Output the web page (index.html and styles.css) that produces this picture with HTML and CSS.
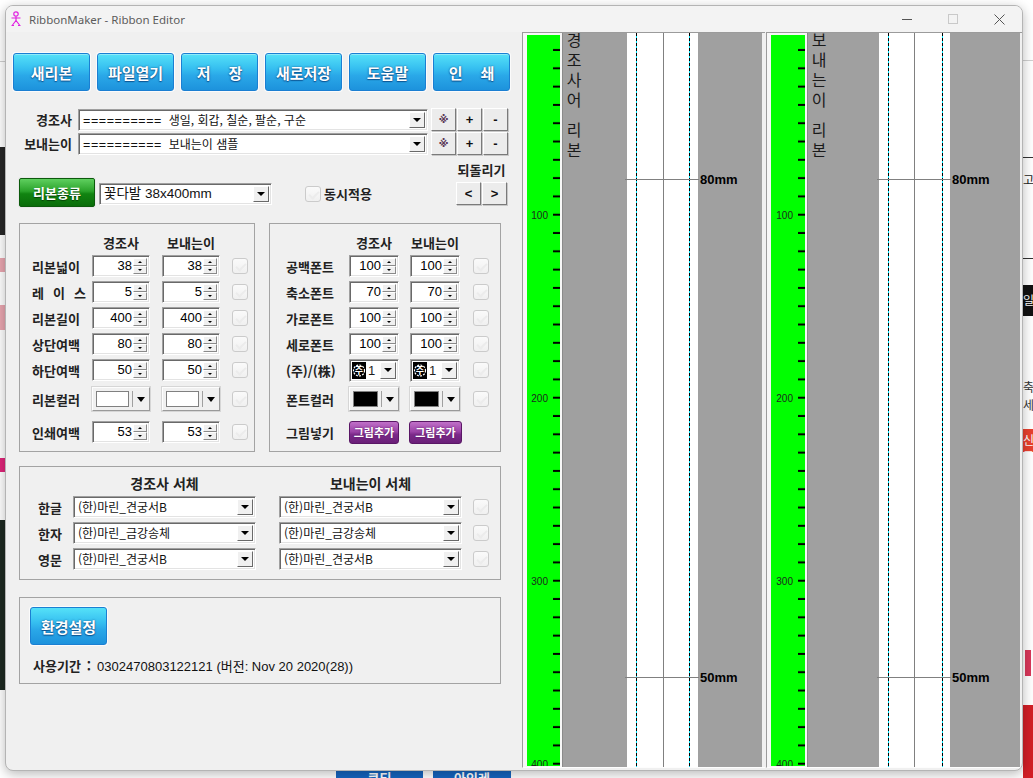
FILE: index.html
```html
<!DOCTYPE html>
<html lang="ko">
<head>
<meta charset="utf-8">
<title>RibbonMaker - Ribbon Editor</title>
<link rel="stylesheet" href="styles.css">
</head>
<body>
<div class="bg">
  <div class="bgl bgl1"></div>
  <div class="bgl bgl2"></div>
  <div class="bgl bgl3"></div>
  <div class="bgl bgl4"></div>
  <div class="bgl bgl5"></div>
  <div class="bgl bgl6"></div>
  <div class="bgr bgr1"></div>
  <div class="bgr bgr2">고</div>
  <div class="bgr bgr3"></div>
  <div class="bgr bgr4">일</div>
  <div class="bgr bgr5"></div>
  <div class="bgr bgr6">축<br>세요</div>
  <div class="bgr bgr7">신고</div>
  <div class="bgr bgr8"></div>
  <div class="bgr bgr9"></div>
  <div class="bgb bgb1">쿠티</div>
  <div class="bgb bgb2">아인레</div>
</div>

<div class="win">
  <div class="titlebar">
    <svg class="appicon" width="12" height="16" viewBox="0 0 12 16">
      <circle cx="6" cy="3" r="2.2" fill="none" stroke="#e020e0" stroke-width="1.2"/>
      <path d="M1.5 7h9M6 5.5v4M6 9.5L2.5 14M6 9.5l3.5 4.5M1.5 14.5h2.5M8 14.5h2.5" stroke="#e020e0" stroke-width="1.2" fill="none"/>
    </svg>
    <span class="title">RibbonMaker - Ribbon Editor</span>
    <div class="ctrls">
      <div class="ctrl"><span class="minl"></span></div>
      <div class="ctrl"><span class="maxb"></span></div>
      <div class="ctrl"><svg width="11" height="11" viewBox="0 0 11 11"><path d="M0.5 0.5l10 10M10.5 0.5l-10 10" stroke="#555" stroke-width="1"/></svg></div>
    </div>
  </div>

  <div class="client">
    <div class="leftpane">
      <div class="toolbar">
        <div class="tbtn">새리본</div>
        <div class="tbtn">파일열기</div>
        <div class="tbtn">저<span class="gap18"></span>장</div>
        <div class="tbtn">새로저장</div>
        <div class="tbtn">도움말</div>
        <div class="tbtn">인<span class="gap18"></span>쇄</div>
      </div>

      <div class="namerow r1">
        <div class="nlabel">경조사</div>
        <div class="combo wname"><span class="ctext"><span class="eq">==========</span>&nbsp;&nbsp;생일, 회갑, 칠순, 팔순, 구순</span><span class="ddb"></span></div>
        <div class="sbtns"><div class="sbtn kome">※</div><div class="sbtn">+</div><div class="sbtn">-</div></div>
      </div>
      <div class="namerow r2">
        <div class="nlabel">보내는이</div>
        <div class="combo wname"><span class="ctext"><span class="eq">==========</span>&nbsp;&nbsp;보내는이 샘플</span><span class="ddb"></span></div>
        <div class="sbtns"><div class="sbtn kome">※</div><div class="sbtn">+</div><div class="sbtn">-</div></div>
      </div>

      <div class="typerow">
        <div class="gbtn">리본종류</div>
        <div class="combo wtype"><span class="ctext big">꽃다발 38x400mm</span><span class="ddb"></span></div>
        <div class="sync"><span class="chk"></span><span class="blabel">동시적용</span></div>
        <div class="undo">
          <div class="blabel">되돌리기</div>
          <div class="sbtns"><div class="sbtn">&lt;</div><div class="sbtn">&gt;</div></div>
        </div>
      </div>

      <div class="groups">
        <div class="grp g1">
          <div class="grow ghead"><span class="glab"></span><span class="hc c1">경조사</span><span class="hc c2">보내는이</span></div>
          <div class="grow"><span class="glab">리본넓이</span>
            <div class="spin c1"><span class="val">38</span><span class="arrows"><i></i><i class="dn"></i></span></div>
            <div class="spin c2"><span class="val">38</span><span class="arrows"><i></i><i class="dn"></i></span></div>
            <span class="chk ck"></span></div>
          <div class="grow"><span class="glab spread"><span>레</span><span>이</span><span>스</span></span>
            <div class="spin c1"><span class="val">5</span><span class="arrows"><i></i><i class="dn"></i></span></div>
            <div class="spin c2"><span class="val">5</span><span class="arrows"><i></i><i class="dn"></i></span></div>
            <span class="chk ck"></span></div>
          <div class="grow"><span class="glab">리본길이</span>
            <div class="spin c1"><span class="val">400</span><span class="arrows"><i></i><i class="dn"></i></span></div>
            <div class="spin c2"><span class="val">400</span><span class="arrows"><i></i><i class="dn"></i></span></div>
            <span class="chk ck"></span></div>
          <div class="grow"><span class="glab">상단여백</span>
            <div class="spin c1"><span class="val">80</span><span class="arrows"><i></i><i class="dn"></i></span></div>
            <div class="spin c2"><span class="val">80</span><span class="arrows"><i></i><i class="dn"></i></span></div>
            <span class="chk ck"></span></div>
          <div class="grow"><span class="glab">하단여백</span>
            <div class="spin c1"><span class="val">50</span><span class="arrows"><i></i><i class="dn"></i></span></div>
            <div class="spin c2"><span class="val">50</span><span class="arrows"><i></i><i class="dn"></i></span></div>
            <span class="chk ck"></span></div>
          <div class="grow rowc"><span class="glab">리본컬러</span>
            <div class="ccombo c1"><span class="sw swhite"></span><span class="csep"></span><span class="tri"></span></div>
            <div class="ccombo c2"><span class="sw swhite"></span><span class="csep"></span><span class="tri"></span></div>
            <span class="chk ck"></span></div>
          <div class="grow rowl"><span class="glab">인쇄여백</span>
            <div class="spin c1"><span class="val">53</span><span class="arrows"><i></i><i class="dn"></i></span></div>
            <div class="spin c2"><span class="val">53</span><span class="arrows"><i></i><i class="dn"></i></span></div>
            <span class="chk ck"></span></div>
        </div>

        <div class="grp g2">
          <div class="grow ghead"><span class="glab"></span><span class="hc c1">경조사</span><span class="hc c2">보내는이</span></div>
          <div class="grow"><span class="glab">공백폰트</span>
            <div class="spin c1"><span class="val">100</span><span class="arrows"><i></i><i class="dn"></i></span></div>
            <div class="spin c2"><span class="val">100</span><span class="arrows"><i></i><i class="dn"></i></span></div>
            <span class="chk ck"></span></div>
          <div class="grow"><span class="glab">축소폰트</span>
            <div class="spin c1"><span class="val">70</span><span class="arrows"><i></i><i class="dn"></i></span></div>
            <div class="spin c2"><span class="val">70</span><span class="arrows"><i></i><i class="dn"></i></span></div>
            <span class="chk ck"></span></div>
          <div class="grow"><span class="glab">가로폰트</span>
            <div class="spin c1"><span class="val">100</span><span class="arrows"><i></i><i class="dn"></i></span></div>
            <div class="spin c2"><span class="val">100</span><span class="arrows"><i></i><i class="dn"></i></span></div>
            <span class="chk ck"></span></div>
          <div class="grow"><span class="glab">세로폰트</span>
            <div class="spin c1"><span class="val">100</span><span class="arrows"><i></i><i class="dn"></i></span></div>
            <div class="spin c2"><span class="val">100</span><span class="arrows"><i></i><i class="dn"></i></span></div>
            <span class="chk ck"></span></div>
          <div class="grow"><span class="glab">(주)/(株)</span>
            <div class="jcombo c1">
              <svg class="jicon" width="14" height="17" viewBox="0 0 14 17"><rect width="14" height="17" fill="#000"/><circle cx="7" cy="8.5" r="5.5" fill="none" stroke="#fff" stroke-width="1.2" stroke-dasharray="2 1.2"/><text x="7" y="12" font-size="9" font-weight="700" fill="#fff" text-anchor="middle" font-family="Noto Sans CJK KR, sans-serif">주</text></svg>
              <span class="jval">1</span><span class="ddb"></span></div>
            <div class="jcombo c2">
              <svg class="jicon" width="14" height="17" viewBox="0 0 14 17"><rect width="14" height="17" fill="#000"/><circle cx="7" cy="8.5" r="5.5" fill="none" stroke="#fff" stroke-width="1.2" stroke-dasharray="2 1.2"/><text x="7" y="12" font-size="9" font-weight="700" fill="#fff" text-anchor="middle" font-family="Noto Sans CJK KR, sans-serif">주</text></svg>
              <span class="jval">1</span><span class="ddb"></span></div>
            <span class="chk ck"></span></div>
          <div class="grow rowc"><span class="glab">폰트컬러</span>
            <div class="ccombo c1"><span class="sw sblack"></span><span class="csep"></span><span class="tri"></span></div>
            <div class="ccombo c2"><span class="sw sblack"></span><span class="csep"></span><span class="tri"></span></div>
            <span class="chk ck"></span></div>
          <div class="grow rowl"><span class="glab">그림넣기</span>
            <div class="pbtn c1">그림추가</div>
            <div class="pbtn c2">그림추가</div>
          </div>
        </div>
      </div>

      <div class="grp fgrp">
        <div class="frow fhead"><span class="flab"></span><span class="fh f1">경조사 서체</span><span class="fh f2">보내는이 서체</span></div>
        <div class="frow"><span class="flab">한글</span>
          <div class="combo f1"><span class="ctext">(한)마린_견궁서B</span><span class="ddb"></span></div>
          <div class="combo f2"><span class="ctext">(한)마린_견궁서B</span><span class="ddb"></span></div>
          <span class="chk fck"></span></div>
        <div class="frow"><span class="flab">한자</span>
          <div class="combo f1"><span class="ctext">(한)마린_금강송체</span><span class="ddb"></span></div>
          <div class="combo f2"><span class="ctext">(한)마린_금강송체</span><span class="ddb"></span></div>
          <span class="chk fck"></span></div>
        <div class="frow"><span class="flab">영문</span>
          <div class="combo f1"><span class="ctext">(한)마린_견궁서B</span><span class="ddb"></span></div>
          <div class="combo f2"><span class="ctext">(한)마린_견궁서B</span><span class="ddb"></span></div>
          <span class="chk fck"></span></div>
      </div>

      <div class="grp info">
        <div class="tbtn envbtn">환경설정</div>
        <div class="period"><span class="blabel">사용기간</span><span class="blabel colon">:</span><span class="ptext">0302470803122121 (버전: Nov 20 2020(28))</span></div>
      </div>
    </div>

    <div class="preview">
      <div class="panel p1">
        <div class="frame">
          <div class="rwrap">
            <svg class="ruler" width="33" height="731" viewBox="0 0 33 731">
              <defs><pattern id="tk1" width="33" height="18.3" patternUnits="userSpaceOnUse" y="-2.3"><rect x="26" y="16.3" width="7" height="2" fill="#000"/></pattern></defs>
              <rect width="33" height="731" fill="#00ff00"/>
              <rect width="33" height="731" fill="url(#tk1)"/>
              <text x="21" y="184" class="rl">100</text>
              <text x="21" y="367" class="rl">200</text>
              <text x="21" y="550" class="rl">300</text>
              <text x="21" y="733" class="rl">400</text>
            </svg>
          </div>
          <div class="gstrip gl1">
            <div class="vtext"><span class="vw">경조사어</span><span class="vw">리본</span></div>
          </div>
          <div class="wstrip">
            <span class="dash d1"></span><span class="cline c36"></span><span class="dash d2"></span>
          </div>
          <div class="gstrip gr1"></div>
        </div>
        <span class="mline m80 l1"></span><span class="mlab t80 lb1">80mm</span>
        <span class="mline m50 l1"></span><span class="mlab t50 lb1">50mm</span>
      </div>

      <div class="panel p2">
        <div class="frame">
          <div class="rwrap">
            <svg class="ruler" width="34" height="731" viewBox="0 0 34 731">
              <defs><pattern id="tk2" width="34" height="18.3" patternUnits="userSpaceOnUse" y="-2.3"><rect x="27" y="16.3" width="7" height="2" fill="#000"/></pattern></defs>
              <rect width="34" height="731" fill="#00ff00"/>
              <rect width="34" height="731" fill="url(#tk2)"/>
              <text x="22" y="184" class="rl">100</text>
              <text x="22" y="367" class="rl">200</text>
              <text x="22" y="550" class="rl">300</text>
              <text x="22" y="733" class="rl">400</text>
            </svg>
          </div>
          <div class="gstrip gl2">
            <div class="vtext"><span class="vw">보내는이</span><span class="vw">리본</span></div>
          </div>
          <div class="wstrip">
            <span class="dash d1"></span><span class="cline c35"></span><span class="dash d2b"></span>
          </div>
          <div class="gstrip gr2"></div>
        </div>
        <span class="mline m80 l2"></span><span class="mlab t80 lb2">80mm</span>
        <span class="mline m50 l2"></span><span class="mlab t50 lb2">50mm</span>
      </div>
    </div>
  </div>
</div>
</body>
</html>
```

FILE: styles.css
```css
* { box-sizing: border-box; margin: 0; padding: 0; }

html, body {
  width: 1033px;
  height: 778px;
  overflow: hidden;
}

body {
  position: relative;
  background: #fff;
  font-family: "Noto Sans CJK KR", "Liberation Sans", sans-serif;
  color: #1e1e1e;
}

/* ---------- page behind the window ---------- */
.bg { position: absolute; inset: 0; }
.bgl, .bgr, .bgb { position: absolute; overflow: hidden; }
.bgl { left: 0; width: 6px; }
.bgl1 { top: 61px; height: 1px; background: #cfcfcf; }
.bgl2 { top: 147px; height: 88px; background: #272727; }
.bgl3 { top: 258px; height: 14px; background: #e9a6b0; }
.bgl4 { top: 305px; height: 25px; background: #e9a6b0; }
.bgl5 { top: 458px; height: 14px; background: #e0267a; }
.bgl6 { top: 520px; height: 170px; background: #1e2a22; }

.bgr { left: 1023px; width: 10px; font-size: 12px; line-height: 16px; }
.bgr1 { top: 60px; height: 1px; background: #d0d0d0; }
.bgr2 { top: 172px; height: 16px; color: #222; }
.bgr3 { top: 157px; height: 1px; background: #333; }
.bgr4 { top: 285px; height: 31px; background: #111; color: #fff; padding-top: 7px; }
.bgr5 { top: 258px; height: 1px; background: #333; }
.bgr6 { top: 378px; height: 36px; color: #333; line-height: 18px; }
.bgr7 { top: 429px; height: 23px; background: #e8412f; color: #fff; padding-top: 3px; }
.bgr8 { top: 650px; height: 26px; left: 1025px; width: 6px; background: #d8375a; }
.bgr9 { top: 705px; height: 73px; background: #d21f26; }

.bgb { top: 768px; height: 10px; background: #1565c0; color: #fff; font-size: 13px; font-weight: 700; line-height: 20px; text-align: center; }
.bgb1 { left: 336px; width: 87px; }
.bgb2 { left: 433px; width: 78px; }

/* ---------- window ---------- */
.win {
  position: absolute;
  left: 5px;
  top: 5px;
  width: 1018px;
  height: 766px;
  border: 1px solid #b4b4b4;
  border-radius: 8px;
  background: #f0f0f0;
  box-shadow: 0 3px 12px rgba(0, 0, 0, 0.28);
  overflow: hidden;
  display: flex;
  flex-direction: column;
}

.titlebar {
  height: 26px;
  flex: none;
  display: flex;
  align-items: center;
  background: #f3f3f3;
}
.appicon { margin-left: 4px; flex: none; }
.title {
  margin-left: 7px;
  font-family: "Noto Sans", "Open Sans", sans-serif;
  font-size: 11.5px;
  color: #5c5c5c;
}
.ctrls { margin-left: auto; display: flex; height: 26px; }
.ctrl { width: 46px; height: 26px; display: flex; align-items: center; justify-content: center; }
.minl { width: 10px; height: 1px; background: #555; }
.maxb { width: 10px; height: 10px; border: 1px solid #c9c9c9; }

.client { flex: 1; display: flex; min-height: 0; }

/* ---------- left pane ---------- */
.leftpane {
  width: 515px;
  flex: none;
  padding-top: 21px;
  display: flex;
  flex-direction: column;
}

.toolbar { display: flex; gap: 7px; margin-left: 7px; }

.tbtn {
  width: 77px;
  height: 38px;
  border: 1px solid #1b7fd2;
  border-radius: 3px;
  background: linear-gradient(#55e1f8 0%, #36bff0 40%, #2aa8e8 60%, #1d92dc 100%);
  box-shadow: 0 0 0 1px #fbfbfb, inset 0 1px 0 rgba(255,255,255,0.35);
  color: #fff;
  font-size: 15px;
  font-weight: 700;
  text-shadow: 0 0 2px rgba(0, 50, 110, 0.75), 0 1px 1px rgba(0, 50, 110, 0.6);
  display: flex;
  align-items: center;
  justify-content: center;
  white-space: nowrap;
}
.gap18 { display: inline-block; width: 18px; }

.namerow { display: flex; align-items: center; height: 23px; }
.r1 { margin-top: 17px; }
.r2 { margin-top: 1px; }
.nlabel {
  width: 66px;
  text-align: right;
  font-size: 13px;
  font-weight: 700;
  color: #222;
}

/* sunken combo */
.combo {
  display: flex;
  height: 22px;
  background: #fff;
  border: 1px solid;
  border-color: #a0a0a0 #fff #fff #a0a0a0;
  box-shadow: inset 1px 1px 0 #696969, inset -1px -1px 0 #e3e3e3;
  padding: 2px;
}
.wname { width: 350px; margin-left: 6px; }
.ctext {
  flex: 1;
  font-size: 12px;
  line-height: 16px;
  padding-left: 2px;
  white-space: nowrap;
  overflow: hidden;
  color: #111;
}
.ctext.big { font-size: 13.5px; font-family: "Liberation Sans", "Noto Sans CJK KR", sans-serif; }
.eq { font-family: "Liberation Sans", sans-serif; font-size: 12.5px; letter-spacing: 0.6px; }
.ddb {
  width: 16px;
  flex: none;
  background: #f0f0f0;
  border: 1px solid;
  border-color: #fff #696969 #696969 #fff;
  position: relative;
}
.ddb::after {
  content: "";
  position: absolute;
  left: 50%;
  top: 50%;
  margin: -2px 0 0 -4px;
  border-left: 4px solid transparent;
  border-right: 4px solid transparent;
  border-top: 4px solid #000;
}

.sbtns { display: flex; gap: 1px; margin-left: 3px; }
.sbtn {
  width: 25px;
  height: 23px;
  background: #ececec;
  border: 1px solid;
  border-color: #fff #7a7a7a #7a7a7a #fff;
  box-shadow: 1px 1px 0 #c8c8c8;
  display: flex;
  align-items: center;
  justify-content: center;
  font-family: "Liberation Sans", sans-serif;
  font-size: 13px;
  font-weight: 700;
  color: #111;
}
.sbtn.kome { font-family: "DejaVu Sans", "Noto Sans CJK KR", sans-serif; font-size: 10px; font-weight: 700; color: #5e3a58; }

.typerow {
  display: flex;
  align-items: flex-end;
  height: 47px;
  margin-top: 5px;
  padding-left: 13px;
  padding-right: 14px;
}
.gbtn {
  width: 76px;
  height: 29px;
  border: 1px solid #0c5a0c;
  border-radius: 2px;
  background: linear-gradient(#5fcf5f 0%, #2aa22a 45%, #118411 55%, #0a6d0a 100%);
  box-shadow: 0 0 0 1px #e8e8e8;
  color: #fff;
  font-size: 13px;
  font-weight: 700;
  text-shadow: 0 1px 1px rgba(0, 40, 0, 0.7);
  display: flex;
  align-items: center;
  justify-content: center;
}
.wtype { width: 173px; margin-left: 4px; margin-bottom: 2px; }
.sync { display: flex; align-items: center; margin-left: 33px; margin-bottom: 4px; }
.sync .blabel { margin-left: 3px; }
.blabel { font-size: 13px; font-weight: 700; color: #222; white-space: nowrap; }
.undo { margin-left: auto; display: flex; flex-direction: column; align-items: center; margin-bottom: 2px; }
.undo .sbtns { margin-left: 0; margin-top: 3px; }

/* disabled check */
.chk {
  width: 16px;
  height: 16px;
  flex: none;
  border: 1px solid #cbcbcb;
  border-radius: 3px;
  background: linear-gradient(#fafafa, #f0f0f0);
  position: relative;
  display: inline-block;
}
.chk::after {
  content: "";
  position: absolute;
  left: 5px;
  top: 2px;
  width: 4px;
  height: 8px;
  border: solid #ececec;
  border-width: 0 2px 2px 0;
  transform: rotate(45deg);
}

/* ---------- groups ---------- */
.grp { border: 1px solid #a3a3a3; }

.groups { display: flex; gap: 14px; margin-top: 16px; margin-left: 13px; }
.g1 { width: 236px; height: 229px; padding: 9px 0 0 12px; }
.g2 { width: 232px; height: 229px; padding: 9px 0 0 16px; }

.grow { display: flex; align-items: center; height: 22px; margin-top: 4px; }
.grow.ghead { height: 18px; margin-top: 0; }
.grow.rowc { height: 24px; margin-top: 6px; }
.grow.rowl { margin-top: 10px; }

.glab { font-size: 13px; font-weight: 700; color: #222; white-space: nowrap; flex: none; }
.g1 .glab { width: 60px; }
.g2 .glab { width: 63px; }
.glab.spread { display: flex; justify-content: space-between; padding-right: 6px; }

.hc { font-size: 13px; font-weight: 700; text-align: center; color: #222; flex: none; }

.g1 .c1 { width: 58px; }
.g1 .c2 { width: 58px; margin-left: 12px; }
.g1 .ck { margin-left: 12px; }
.g2 .c1 { width: 50px; }
.g2 .c2 { width: 50px; margin-left: 11px; }
.g2 .ck { margin-left: 13px; }

.spin {
  display: flex;
  height: 22px;
  flex: none;
  background: #fff;
  border: 1px solid;
  border-color: #a0a0a0 #fff #fff #a0a0a0;
  box-shadow: inset 1px 1px 0 #696969, inset -1px -1px 0 #e3e3e3;
  padding: 2px;
}
.val {
  flex: 1;
  text-align: right;
  font-family: "Liberation Sans", sans-serif;
  font-size: 13px;
  line-height: 16px;
  padding-right: 1px;
  color: #000;
}
.arrows { width: 14px; display: flex; flex-direction: column; flex: none; }
.arrows i {
  flex: 1;
  background: #f0f0f0;
  border: 1px solid;
  border-color: #fff #8a8a8a #8a8a8a #fff;
  position: relative;
}
.arrows i::after {
  content: "";
  position: absolute;
  left: 50%;
  top: 50%;
  margin: -1px 0 0 -2px;
  border-left: 2px solid transparent;
  border-right: 2px solid transparent;
  border-bottom: 2px solid #000;
}
.arrows i.dn::after { border-bottom: 0; border-top: 2px solid #000; }

.ccombo {
  height: 24px;
  flex: none;
  display: flex;
  align-items: center;
  background: #f0f0f0;
  border: 1px solid;
  border-color: #fdfdfd #9a9a9a #9a9a9a #fdfdfd;
  box-shadow: 0 0 0 1px #d6d6d6;
  padding-left: 3px;
}
.sw { width: 33px; height: 16px; border: 1px solid #808080; flex: none; }
.g2 .sw { width: 25px; }
.swhite { background: #fff; }
.sblack { background: #000; }
.csep { width: 1px; height: 16px; background: #a0a0a0; margin-left: 3px; flex: none; }
.tri {
  margin-left: 4px;
  flex: none;
  border-left: 4px solid transparent;
  border-right: 4px solid transparent;
  border-top: 5px solid #000;
}

.jcombo {
  display: flex;
  align-items: center;
  height: 23px;
  flex: none;
  background: #fff;
  border: 1px solid;
  border-color: #a0a0a0 #fff #fff #a0a0a0;
  box-shadow: inset 1px 1px 0 #696969, inset -1px -1px 0 #e3e3e3;
  padding: 2px;
}
.jicon { flex: none; }
.jval { flex: 1; font-family: "Liberation Sans", sans-serif; font-size: 13px; padding-left: 2px; }
.jcombo .ddb { align-self: stretch; }

.pbtn {
  height: 23px;
  width: 52px;
  flex: none;
  border: 1px solid #5a1766;
  border-radius: 3px;
  background: linear-gradient(#c070c8 0%, #9c44a8 45%, #7c2a8a 60%, #6a1f78 100%);
  color: #fff;
  font-size: 11px;
  font-weight: 700;
  text-shadow: 0 0 2px rgba(60, 0, 70, 0.7);
  display: flex;
  align-items: center;
  justify-content: center;
  white-space: nowrap;
}
.g2 .pbtn.c2 { margin-left: 10px; width: 53px; }

/* font group */
.fgrp { width: 482px; height: 114px; margin-top: 14px; margin-left: 13px; padding: 7px 0 0 18px; }
.frow { display: flex; align-items: center; height: 22px; margin-top: 4px; }
.frow.fhead { height: 18px; margin-top: 0; }
.flab { width: 35px; flex: none; font-size: 13px; font-weight: 700; color: #222; }
.fh { font-size: 14px; font-weight: 700; text-align: center; color: #222; flex: none; }
.f1 { width: 183px; flex: none; }
.f2 { width: 183px; flex: none; margin-left: 23px; }
.fck { margin-left: 11px; }

/* info group */
.info { width: 482px; height: 87px; margin-top: 17px; margin-left: 13px; padding: 9px 0 0 10px; }
.envbtn { box-shadow: 0 0 0 1px #fbfbfb; }
.period { display: flex; align-items: baseline; margin-top: 11px; margin-left: 3px; }
.colon { margin-left: 6px; }
.ptext { margin-left: 6px; font-family: "Liberation Sans", "Noto Sans CJK KR", sans-serif; font-size: 13px; color: #111; }

/* ---------- preview panels ---------- */
.preview { flex: 1; display: flex; }
.panel {
  position: relative;
  height: 100%;
  display: flex;
  padding: 0 0 2px 1px;
}
.p1 { width: 244px; }
.p2 { width: 257px; }
.frame {
  flex: 1;
  display: flex;
  border-top: 1px solid #9b9b9b;
  border-left: 1px solid #9b9b9b;
  border-bottom: 1px solid #fdfdfd;
}
.rwrap {
  flex: none;
  padding: 2px 2px 1px 4px;
  background: #f7f7f7;
  border-right: 1px solid #8a8a8a;
  display: flex;
}
.ruler { display: block; }
.rl { font-family: "Liberation Sans", sans-serif; font-size: 10px; fill: #1d2a1d; text-anchor: end; }

.gstrip { background: #a0a0a0; flex: none; overflow: hidden; }
.gl1, .gr1 { width: 64px; }
.gl2 { width: 71px; }
.gr2 { width: 70px; }
.wstrip { background: #fff; width: 71px; flex: none; position: relative; }

.vtext { display: flex; flex-direction: column; align-items: flex-start; gap: 10px; margin-left: 2px; margin-top: -1px; }
.vw {
  writing-mode: vertical-rl;
  text-orientation: upright;
  font-size: 16px;
  line-height: 17px;
  letter-spacing: 4px;
  color: #1a1a1a;
}

.dash, .cline { position: absolute; top: 0; bottom: 0; width: 1px; }
.dash { background: repeating-linear-gradient(to bottom, #000 0 3px, #00e8ff 3px 5px); }
.d1 { left: 9px; }
.d2 { left: 62px; }
.d2b { left: 63px; }
.cline { background: #808080; }
.c36 { left: 36px; }
.c35 { left: 35px; }

.mline { position: absolute; height: 1px; width: 74px; background: #808080; }
.m80 { top: 147px; }
.m50 { top: 645px; }
.l1 { left: 104px; }
.l2 { left: 112px; }
.mlab {
  position: absolute;
  font-family: "Liberation Sans", sans-serif;
  font-size: 13px;
  font-weight: 700;
  line-height: 16px;
  color: #000;
}
.t80 { top: 140px; }
.t50 { top: 638px; }
.lb1 { left: 179px; }
.lb2 { left: 187px; }
```
